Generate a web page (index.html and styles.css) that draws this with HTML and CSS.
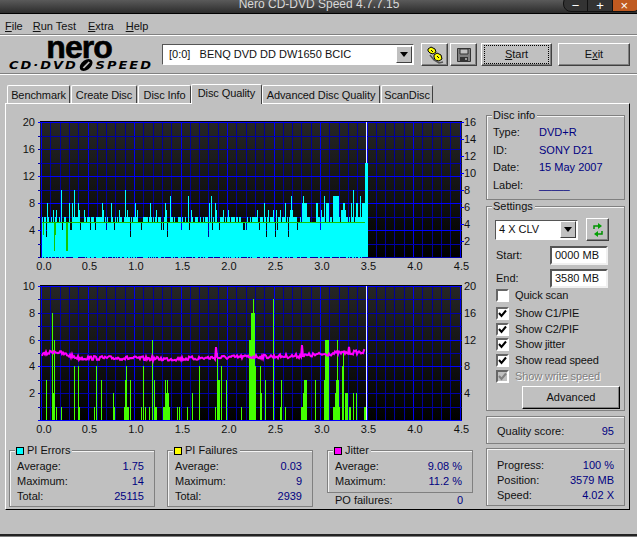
FILE: index.html
```html
<!DOCTYPE html>
<html>
<head>
	<meta charset="utf-8">
	<title>Nero CD-DVD Speed 4.7.7.15</title>
	<link rel="stylesheet" href="styles.css">
</head>
<body>
	<div class="titlebar">
		<span class="titleText">Nero CD-DVD Speed 4.7.7.15</span>
		<div class="winButtons">
			<span class="winBtn">&minus;</span>
			<span class="winBtn">+</span>
			<span class="winBtn winClose">&times;</span>
		</div>
	</div>

	<div class="menubar">
		<span class="menuItem"><u>F</u>ile</span>
		<span class="menuItem"><u>R</u>un Test</span>
		<span class="menuItem"><u>E</u>xtra</span>
		<span class="menuItem"><u>H</u>elp</span>
	</div>

	<div class="toolbar">
		<div class="logo">
			<div class="logoNero">nero</div>
			<div class="logoSpeed">CD&middot;DVD<svg class="logoDisc" width="15" height="12" viewBox="0 0 15 12"><ellipse cx="7.5" cy="6" rx="5" ry="6" transform="skewX(-20) translate(2 0)" fill="#000"/><path d="M5 9L10 3" stroke="#c0c0c0" stroke-width="1.5"/></svg>SPEED</div>
		</div>
		<div class="combo comboDrive">
			<span class="comboText">[0:0]&nbsp;&nbsp;&nbsp;BENQ DVD DD DW1650 BCIC</span>
			<span class="comboArrow"><i></i></span>
		</div>
		<button class="btn btnIcon">
			<svg width="18" height="18" viewBox="0 0 18 18"><path d="M2 3l3-2 4 2 1 3-3 2-3-1-2-2z" fill="#ffff00" stroke="#000"/><path d="M8 9l3-2 4 2 1 4-3 2-4-1-1-3z" fill="#ffff00" stroke="#000"/><path d="M5 4l2 2M11 10l2 2" stroke="#000"/><path d="M4 9l4 5 5 3 4-1" fill="none" stroke="#555" stroke-width="1.5"/></svg>
		</button>
		<button class="btn btnIcon">
			<svg width="14" height="14" viewBox="0 0 14 14"><path d="M.5.5h13v13H.5z" fill="#808080" stroke="#333"/><path d="M3 1h8v5H3z" fill="#c0c0c0" stroke="#333"/><path d="M3 9h8v4H3z" fill="#333"/><path d="M8 10h2v2H8z" fill="#999"/></svg>
		</button>
		<button class="btn btnText btnStart"><span class="focusBox"><u>S</u>tart</span></button>
		<button class="btn btnText">E<u>x</u>it</button>
	</div>

	<div class="tabs">
		<span class="tab">Benchmark</span>
		<span class="tab">Create Disc</span>
		<span class="tab">Disc Info</span>
		<span class="tab tabActive">Disc Quality</span>
		<span class="tab">Advanced Disc Quality</span>
		<span class="tab">ScanDisc</span>
	</div>

	<div class="panel">
		<div class="leftCol">
			<div class="chart" id="chartTop"></div>
			<div class="chart chartLower" id="chartBottom"></div>
			<div class="stats">
				<div class="group statGroup">
					<span class="legend"><i class="swatch swCyan"></i>PI Errors</span>
					<div class="row"><span>Average:</span><span class="val">1.75</span></div>
					<div class="row"><span>Maximum:</span><span class="val">14</span></div>
					<div class="row"><span>Total:</span><span class="val">25115</span></div>
				</div>
				<div class="group statGroup">
					<span class="legend"><i class="swatch swYellow"></i>PI Failures</span>
					<div class="row"><span>Average:</span><span class="val">0.03</span></div>
					<div class="row"><span>Maximum:</span><span class="val">9</span></div>
					<div class="row"><span>Total:</span><span class="val">2939</span></div>
				</div>
				<div class="jitterCol">
					<div class="group statGroup jitterGroup">
						<span class="legend"><i class="swatch swMagenta"></i>Jitter</span>
						<div class="row"><span>Average:</span><span class="val">9.08 %</span></div>
						<div class="row"><span>Maximum:</span><span class="val">11.2 %</span></div>
					</div>
					<div class="row poRow"><span>PO failures:</span><span class="val">0</span></div>
				</div>
			</div>
		</div>

		<div class="rightCol">
			<div class="group discInfo">
				<span class="legend">Disc info</span>
				<div class="infoRow"><span class="infoLabel">Type:</span><span class="val">DVD+R</span></div>
				<div class="infoRow"><span class="infoLabel">ID:</span><span class="val">SONY D21</span></div>
				<div class="infoRow"><span class="infoLabel">Date:</span><span class="val">15 May 2007</span></div>
				<div class="infoRow"><span class="infoLabel">Label:</span><span class="val">_____</span></div>
			</div>

			<div class="group settings">
				<span class="legend">Settings</span>
				<div class="speedRow">
					<div class="combo comboSpeed">
						<span class="comboText">4 X CLV</span>
						<span class="comboArrow"><i></i></span>
					</div>
					<button class="btn btnRefresh">
						<svg width="12" height="16" viewBox="0 0 12 16"><path d="M2 7V4h5" fill="none" stroke="#009000" stroke-width="1.5"/><path d="M6 1l4 3-4 3z" fill="#00a000"/><path d="M10 9v3H5" fill="none" stroke="#009000" stroke-width="1.5"/><path d="M6 9l-4 3 4 3z" fill="#00a000"/></svg>
					</button>
				</div>
				<div class="fieldRow"><span>Start:</span><span class="field">0000 MB</span></div>
				<div class="fieldRow fieldRowEnd"><span>End:</span><span class="field">3580 MB</span></div>
				<div class="checkRow checkFirst"><span class="check"></span>Quick scan</div>
				<div class="checkRow"><span class="check on"><svg width="9" height="9" viewBox="0 0 9 9"><path d="M1 4l2.500 3L8 1.500" fill="none" stroke="#000" stroke-width="2"/></svg></span>Show C1/PIE</div>
				<div class="checkRow"><span class="check on"><svg width="9" height="9" viewBox="0 0 9 9"><path d="M1 4l2.500 3L8 1.500" fill="none" stroke="#000" stroke-width="2"/></svg></span>Show C2/PIF</div>
				<div class="checkRow"><span class="check on"><svg width="9" height="9" viewBox="0 0 9 9"><path d="M1 4l2.500 3L8 1.500" fill="none" stroke="#000" stroke-width="2"/></svg></span>Show jitter</div>
				<div class="checkRow"><span class="check on"><svg width="9" height="9" viewBox="0 0 9 9"><path d="M1 4l2.500 3L8 1.500" fill="none" stroke="#000" stroke-width="2"/></svg></span>Show read speed</div>
				<div class="checkRow disabled"><span class="check on"><svg width="9" height="9" viewBox="0 0 9 9"><path d="M1 4l2.500 3L8 1.500" fill="none" stroke="#808080" stroke-width="2"/></svg></span>Show write speed</div>
				<button class="btn btnAdvanced">Advanced</button>
			</div>

			<div class="group quality">
				<div class="row"><span>Quality score:</span><span class="val">95</span></div>
			</div>

			<div class="group progress">
				<div class="row"><span>Progress:</span><span class="val">100 %</span></div>
				<div class="row"><span>Position:</span><span class="val">3579 MB</span></div>
				<div class="row"><span>Speed:</span><span class="val">4.02 X</span></div>
			</div>
		</div>
	</div>

	<div class="statusbar"></div>

	<script src="charts.js"></script>
</body>
</html>
```

FILE: styles.css
```css
html, body {
	margin: 0;
	padding: 0;
}
body {
	width: 637px;
	height: 537px;
	overflow: hidden;
	position: relative;
	background-color: #c0c0c0;
	color: #111;
	font: 11px/13px "Liberation Sans", Arial, sans-serif;
}
u {
	text-decoration: underline;
}

/* title bar */
.titlebar {
	height: 13px;
	background: linear-gradient(#5a5a5a, #2c2c2c);
	border-bottom: 1px solid #000;
	text-align: center;
	position: relative;
	overflow: hidden;
}
.titleText {
	display: block;
	color: #d8d8d8;
	font-size: 12px;
	line-height: 9px;
	padding-left: 1px;
}
.winButtons {
	position: absolute;
	top: -5px;
	right: -4px;
	width: 76px;
	height: 15px;
	display: flex;
	border: 1px solid #111;
	border-radius: 8px;
	overflow: hidden;
	background: #333;
}
.winBtn {
	flex: 1;
	color: #fff;
	text-align: center;
	font-size: 13px;
	line-height: 19px;
	border-right: 1px solid #111;
}
.winClose {
	border-right: 0;
	padding-right: 4px;
	background: #c05a20;
}

/* menu */
.menubar {
	display: flex;
	align-items: flex-end;
	height: 20px;
	line-height: 16px;
	padding-left: 5px;
	gap: 12px;
	border-bottom: 1px solid #808080;
	box-shadow: 0 1px 0 #fff;
}
.menuItem:first-child {
	margin-right: -2px;
}

/* toolbar */
.toolbar {
	display: flex;
	align-items: center;
	height: 37px;
	padding: 1px 0 0 9px;
	border-bottom: 1px solid #808080;
	box-shadow: 0 1px 0 #fff;
}
.logo {
	width: 144px;
	margin-right: 9px;
	text-align: center;
	color: #000;
}
.logoNero {
	font: bold 32px/20px "Liberation Sans", sans-serif;
	letter-spacing: -1px;
	-webkit-text-stroke: .6px #000;
	padding: 0 4px 2px 0;
}
.logoSpeed {
	font: italic bold 11px/12px "DejaVu Sans", sans-serif;
	letter-spacing: 1.7px;
	white-space: nowrap;
	transform: scaleX(1.18);
}
.logoDisc {
	vertical-align: -2px;
}
.combo {
	display: flex;
	align-items: center;
	box-sizing: border-box;
	background: #fff;
	border: 1px solid;
	border-color: #555 #fff #fff #555;
	padding: 1px;
}
.comboDrive {
	width: 252px;
	height: 21px;
	margin-right: 7px;
}
.comboText {
	flex: 1;
	padding-left: 5px;
	white-space: nowrap;
}
.comboArrow {
	display: flex;
	align-items: center;
	justify-content: center;
	box-sizing: border-box;
	width: 16px;
	height: 17px;
	background: #c0c0c0;
	border: 1px solid;
	border-color: #fff #404040 #404040 #fff;
}
.comboArrow i {
	border: 4px solid transparent;
	border-top: 5px solid #000;
	border-bottom: 0;
}
.btn {
	display: flex;
	align-items: center;
	justify-content: center;
	box-sizing: border-box;
	padding: 0;
	background: #c0c0c0;
	color: #111;
	font: inherit;
	border: 1px solid;
	border-color: #fff #404040 #404040 #fff;
	box-shadow: inset -1px -1px 0 #808080;
}
.btnIcon {
	width: 27px;
	height: 23px;
	margin-right: 2px;
}
.btnText {
	width: 72px;
	height: 23px;
}
.btnStart {
	width: 71px;
	margin: 0 6px 0 2px;
}
.focusBox {
	display: block;
	width: 65px;
	line-height: 17px;
	border: 1px dotted #000;
	box-sizing: border-box;
}

/* tabs */
.tabs {
	display: flex;
	align-items: flex-end;
	height: 29px;
	padding-left: 7px;
	box-sizing: border-box;
	letter-spacing: -.1px;
}
.tab {
	box-sizing: border-box;
	height: 18px;
	line-height: 18px;
	text-align: center;
	margin-right: 1px;
	border: 1px solid;
	border-color: #fff #404040 transparent #fff;
	border-bottom: 0;
	border-radius: 2px 2px 0 0;
	white-space: nowrap;
}
.tab:nth-child(1) {
	width: 63px;
}
.tab:nth-child(2) {
	width: 66px;
}
.tab:nth-child(3) {
	width: 53px;
}
.tab:nth-child(5) {
	width: 118px;
}
.tab:nth-child(6) {
	width: 52px;
}
.tabActive {
	width: 71px;
	height: 20px;
	line-height: 17px;
	margin: 0 0 -1px -1px;
	background: #c0c0c0;
	position: relative;
	z-index: 1;
}

/* main panel */
.panel {
	display: flex;
	justify-content: space-between;
	box-sizing: border-box;
	width: 625px;
	height: 407px;
	margin-left: 5px;
	border: 1px solid;
	border-color: #fff #000 #000 #fff;
	padding: 11px 4px 0 3px;
}
.leftCol {
	width: 470px;
}
.chart {
	height: 161px;
}
.chartLower {
	margin-top: 3px;
}
.chart svg {
	display: block;
}
.chart text {
	font: 11px "Liberation Sans", Arial, sans-serif;
	fill: #111;
}
.stats {
	display: flex;
	margin-top: 10px;
}
.group {
	position: relative;
	box-sizing: border-box;
	border: 1px solid #808080;
	box-shadow: inset 1px 1px 0 #f4f4f4;
}
.legend {
	position: absolute;
	top: -7px;
	left: 5px;
	display: flex;
	align-items: center;
	padding: 0 2px 0 1px;
	background: #c0c0c0;
}
.swatch {
	display: block;
	box-sizing: border-box;
	width: 8px;
	height: 8px;
	margin-right: 3px;
	border: 1px solid #000;
}
.swCyan {
	background: #00ffff;
}
.swYellow {
	background: #ffff00;
}
.swMagenta {
	background: #ff00ff;
}
.row {
	display: flex;
	justify-content: space-between;
	line-height: 15px;
}
.val {
	color: #000080;
}
.statGroup {
	width: 146px;
	height: 57px;
	padding: 8px 10px 0 7px;
	margin-right: 12px;
}
.jitterCol {
	width: 146px;
	margin-left: 2px;
}
.jitterGroup {
	height: 43px;
	margin-right: 0;
}
.poRow {
	padding: 0 10px 0 8px;
}

/* right column */
.rightCol {
	width: 139px;
}
.discInfo {
	height: 85px;
	padding-top: 8px;
}
.infoRow {
	display: flex;
	height: 17.7px;
	line-height: 17px;
	padding-left: 6px;
}
.infoLabel {
	width: 46px;
}
.settings {
	height: 205px;
	margin-top: 6px;
	padding: 11px 0 0 8px;
}
.speedRow {
	display: flex;
	align-items: center;
}
.comboSpeed {
	width: 83px;
	height: 20px;
	margin-right: 8px;
}
.comboSpeed .comboText {
	padding-left: 2px;
}
.btnRefresh {
	width: 23px;
	height: 23px;
}
.fieldRow {
	display: flex;
	align-items: center;
	justify-content: space-between;
	width: 112px;
	margin: 5px 0 0 1px;
}
.fieldRowEnd {
	margin-top: 4px;
}
.field {
	box-sizing: border-box;
	width: 58px;
	height: 19px;
	line-height: 15px;
	padding-left: 3px;
	background: #fff;
	border: 2px solid;
	border-color: #555 #f0f0f0 #f0f0f0 #555;
}
.checkRow {
	display: flex;
	align-items: center;
	height: 15.600px;
	padding-left: 1px;
	letter-spacing: -.12px;
	white-space: nowrap;
}
.checkFirst {
	height: 15px;
	margin-bottom: 3px;
}
.check {
	display: flex;
	align-items: center;
	justify-content: center;
	box-sizing: border-box;
	width: 13px;
	height: 13px;
	margin-right: 6px;
	background: #fff;
	border: 2px solid;
	border-color: #666 #fff #fff #666;
}
.disabled {
	color: #808080;
	text-shadow: 1px 1px 0 #fff;
}
.disabled .check {
	background: #c0c0c0;
}
.btnAdvanced {
	width: 98px;
	height: 23px;
	margin: 2px 0 0 27px;
	border-color: #fff #000 #000 #fff;
}
.quality {
	height: 28px;
	margin-top: 5px;
	padding: 7px 10px 0 10px;
}
.progress {
	height: 58px;
	margin-top: 4px;
	padding: 9px 10px 0 10px;
}

.statusbar {
	position: absolute;
	left: 0;
	right: 0;
	top: 534px;
	height: 1px;
	border-top: 2px solid #222;
	background: #808080;
}
```

FILE: charts.js
```js
// page coordinates of both plots, 93px per unit on the x axis
var X0 = 42, PX = 93, END_X = 367;
var seed = 7;
function rnd() {
	seed = (seed * 16807) % 2147483647;
	return seed / 2147483647;
}

function line(x1, y1, x2, y2, color) {
	return '<line x1="' + x1 + '" y1="' + y1 + '" x2="' + x2 + '" y2="' + y2 + '" stroke="' + color + '"/>';
}
function bar(x, y, w, h, color) {
	return '<rect x="' + x + '" y="' + y + '" width="' + w + '" height="' + h + '" fill="' + color + '"/>';
}
function label(x, y, text, anchor) {
	return '<text x="' + x + '" y="' + y + '" text-anchor="' + anchor + '">' + text + '</text>';
}

// the grid, ticks and labels that both plots share
function frame(c) {
	var s = '<defs><linearGradient id="bg' + c.id + '" x1="0" y1="0" x2="0" y2="1"><stop offset="0" stop-color="#262626"/><stop offset="1" stop-color="#000"/></linearGradient></defs>';
	s += bar(41, c.top - 1, 422, c.h + 2, 'url(#bg' + c.id + ')');
	s += bar(41, c.top - 1, 422, 2, '#000');
	return s;
}
function grid(c) {
	var s = '', i, y, x;
	for (i = 0; i <= 45; i++) {
		x = Math.round(X0 + i * PX / 10) + 0.5;
		s += line(x, c.top, x, c.top + c.h, i % 5 == 0 ? '#0000f0' : '#000098');
	}
	for (i = 0; i <= 10; i++) {
		y = Math.round(c.top + i * c.h / 10) + 0.5;
		s += line(39, y, 463, y, c.bright.indexOf(i) >= 0 ? '#0000ff' : '#0000a8');
	}
	return s;
}
function labels(c) {
	var s = '', i, y;
	for (i = 0; i <= 9; i++) {
		s += label(X0 + 3 + i * PX / 2 - (i > 0 ? 1 : 0), c.top + c.h + 13, (i / 2).toFixed(1), 'middle');
	}
	// left scale: one label per fifth of the height
	c.left.forEach(function (n, k) {
		y = c.top + k * c.h / 5;
		s += label(36, y + 4, n, 'end');
	});
	c.right.forEach(function (n, k) {
		y = c.top + k * c.rightStep;
		s += label(465, y + 4, n, 'start');
	});
	return s;
}
function wrap(id, c, body) {
	var box = '<svg width="470" height="161" viewBox="10 ' + (c.top - 7) + ' 470 161" shape-rendering="crispEdges">';
	document.getElementById(id).innerHTML = box + body + '</svg>';
}

// upper plot: PI errors
function upper() {
	var c = {
		id: 1, top: 122, h: 135, bright: [0, 4, 6, 8],
		left: [20, 16, 12, 8, 4],
		right: [16, 14, 12, 10, 8, 6, 4, 2], rightStep: 17
	};
	var u = c.h / 20;
	var vals = {}, x, r, s = '';
	for (x = 43; x <= END_X; x++) {
		r = rnd();
		vals[x] = r < .55 ? 6 : r < .9 ? 5 : r < .96 ? 4 : 3;
	}
	var spikes = [[47, 3], [48, 8], [54, 7], [57, 7], [62, 10], [70, 8], [73, 8], [75, 10], [79, 8], [80, 7], [85, 7],
		[103, 8], [104, 7], [112, 8], [120, 7], [126, 10], [128, 7], [136, 8], [138, 7], [151, 8], [157, 7], [166, 8],
		[167, 7], [171, 9], [189, 9], [192, 7], [210, 8], [212, 9], [216, 8], [217, 7], [224, 7], [229, 7], [251, 6],
		[258, 7], [265, 8], [269, 7], [274, 7], [277, 7], [281, 7], [286, 8], [292, 9], [291, 7], [293, 7], [304, 9],
		[303, 8], [305, 8], [306, 8], [307, 8], [317, 8], [318, 8], [322, 7], [325, 9], [327, 8], [328, 8], [329, 8],
		[334, 9], [335, 9], [336, 9], [337, 9], [338, 9], [339, 9], [342, 7], [343, 7], [344, 8], [345, 8], [346, 7],
		[352, 8], [354, 10], [357, 8], [358, 8], [361, 9], [363, 8], [364, 8], [365, 8]];
	spikes.forEach(function (p) { vals[p[0]] = p[1]; });
	for (x = 43; x <= 365; x++) {
		s += bar(x, Math.round(c.top + c.h - vals[x] * u), 1, Math.round(vals[x] * u), '#00ffff');
	}
	s += bar(366, c.top + c.h - 94, 3, 94, '#00ffff');
	s += line(367.5, c.top, 367.5, c.top + c.h - 94, '#e8e8ff');
	// read speed line with its few drops
	s += bar(43, 222, 323, 1, '#12c800');
	s += bar(44, 222, 1, 13, '#12c800');
	s += bar(55, 222, 1, 29, '#12c800');
	s += bar(56, 222, 1, 13, '#12c800');
	s += bar(67, 222, 2, 29, '#12c800');
	var ticks = '';
	c.right.forEach(function (n, k) {
		var y = Math.round(c.top + k * c.rightStep) + .5;
		ticks += line(461, y, 465, y, '#0000ff');
	});
	wrap('chartTop', c, frame(c) + grid(c) + ticks + s + labels(c));
}

// lower plot: PI failures and jitter
function lower() {
	var c = {
		id: 2, top: 285, h: 134, bright: [0, 4, 6, 10],
		left: [10, 8, 6, 4, 2], right: [20, 16, 12, 8, 4], rightStep: 26.8
	};
	var u = c.h / 10;
	var bars = [[47, 1, 3], [53, 1, 8], [55, 1, 6], [53, 3, 2], [57, 1, 1], [62, 1, 1], [75, 1, 4], [79, 1, 4], [79, 2, 1],
		[95, 1, 1], [97, 1, 4], [102, 1, 3], [114, 1, 2], [115, 1, 1], [125, 5, 1], [126, 2, 3], [127, 1, 4], [131, 1, 3],
		[142, 1, 1], [144, 1, 4], [146, 1, 1], [150, 1, 1], [153, 1, 6], [155, 1, 3], [155, 3, 1], [164, 7, 1], [166, 4, 2],
		[166, 1, 3], [168, 1, 3], [178, 1, 1], [180, 1, 1], [188, 1, 1], [193, 1, 2], [200, 1, 4], [216, 1, 1], [218, 1, 5],
		[219, 2, 3], [222, 1, 4], [227, 1, 3], [242, 1, 1], [250, 2, 3], [250, 3, 6], [252, 4, 8], [254, 1, 9], [250, 7, 4],
		[261, 1, 4], [261, 2, 2], [266, 1, 3], [274, 1, 9], [281, 2, 1], [282, 1, 3], [286, 1, 1], [302, 6, 1], [304, 3, 2],
		[305, 3, 3], [316, 1, 3], [325, 2, 3], [326, 4, 6], [325, 5, 2], [334, 7, 1], [336, 4, 2], [337, 1, 3], [338, 1, 6],
		[339, 1, 3], [343, 2, 4], [344, 1, 5], [346, 3, 2], [350, 1, 1], [351, 1, 1], [354, 1, 2], [357, 1, 2], [365, 3, 1]];
	var s = '';
	bars.forEach(function (b) {
		s += bar(b[0], Math.round(c.top + c.h - b[2] * u), b[1], Math.round(b[2] * u), '#44ff00');
	});
	s += line(367.5, c.top, 367.5, c.top + c.h, '#e8e8ff');

	// jitter trace: y follows a few fixed points, with noise on top
	var knots = [[43, 354], [55, 350], [65, 353], [80, 357], [120, 357], [170, 358], [240, 356], [300, 355], [340, 352], [366, 351]];
	var pts = [], k = 0, x, y, t;
	for (x = 43; x <= 366; x++) {
		while (x > knots[k + 1][0]) k++;
		t = (x - knots[k][0]) / (knots[k + 1][0] - knots[k][0]);
		y = knots[k][1] + t * (knots[k + 1][1] - knots[k][1]) + (rnd() - .5) * 4;
		if (x == 217) y = 346;
		if (x == 303) y = 344;
		if (x == 350) y = 346;
		pts.push(x + ',' + y.toFixed(1));
	}
	s += '<polyline points="' + pts.join(' ') + '" fill="none" stroke="#ff00ff" stroke-width="2" shape-rendering="auto"/>';
	wrap('chartBottom', c, frame(c) + grid(c) + s + labels(c));
}

upper();
lower();
```
